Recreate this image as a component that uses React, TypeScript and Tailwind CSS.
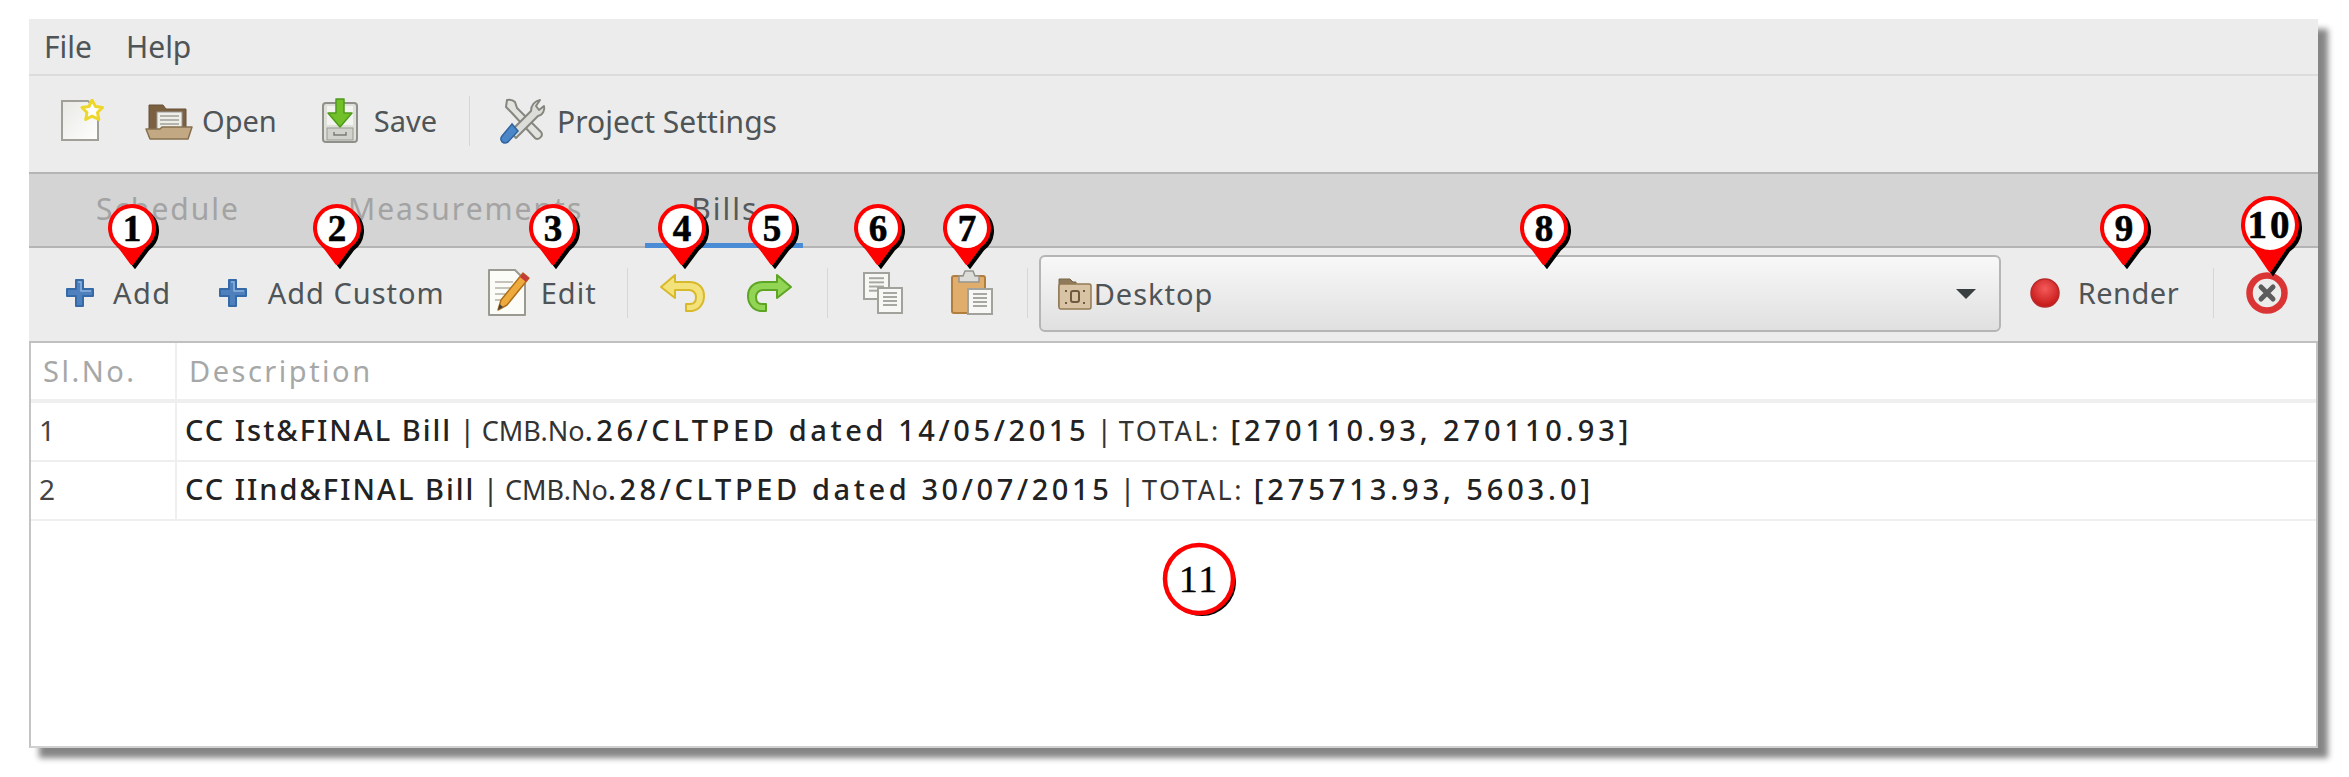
import type { ReactNode } from 'react';

function NewIcon() {
  return (
    <svg width="45" height="44" viewBox="0 0 45 44" className="shrink-0">
      <defs>
        <linearGradient id="docFill" x1="0" y1="0" x2="1" y2="1">
          <stop offset="0" stopColor="#e8e8e4" />
          <stop offset="1" stopColor="#ffffff" />
        </linearGradient>
      </defs>
      <path d="M2 2h26l10 10v29H2z" fill="url(#docFill)" stroke="#a0a098" strokeWidth="2" />
      <path d="M32 1l3.500 6.500 7 1-5 5 1.400 7-6.900-3.300-6.300 3.300 1.300-7-5-5 7-1z" fill="#fff" stroke="#eed72c" strokeWidth="3" strokeLinejoin="round" />
    </svg>
  );
}

function OpenIcon() {
  return (
    <svg width="48" height="40" viewBox="0 0 48 40" className="shrink-0">
      <path d="M4 36V4h14l3 4h20v24z" fill="#7c6140" stroke="#66503a" />
      <rect x="12" y="11" width="25" height="18" fill="#efefea" stroke="#999" />
      <path d="M15 15h19M15 19h19M15 23h19" stroke="#b4b4ac" strokeWidth="2" />
      <path d="M1 28h14l2-2h30l-4 12H5z" fill="#c3a983" stroke="#86704f" strokeWidth="1.500" strokeLinejoin="round" />
    </svg>
  );
}

function SaveIcon() {
  return (
    <svg width="38" height="46" viewBox="0 0 38 46" className="shrink-0">
      <rect x="2" y="5" width="34" height="39" rx="3" fill="#dfe0da" stroke="#8f9089" strokeWidth="2" />
      <rect x="6" y="8" width="26" height="19" fill="#f2f2ef" />
      <rect x="6" y="30" width="26" height="12" fill="#d2d2cd" stroke="#9a9a94" />
      <path d="M13 34v3h12v-3" fill="none" stroke="#7d7d78" strokeWidth="1.500" />
      <path d="M15 1h8v14h8L19 29 7 15h8z" fill="#72c029" stroke="#4f9a1b" strokeWidth="1.500" strokeLinejoin="round" />
    </svg>
  );
}

function SettingsIcon() {
  return (
    <svg width="48" height="47" viewBox="0 0 48 47" className="shrink-0">
      <path d="M9 2l-1 7 5 5 24 26c3 3 9-2 6-6L19 10l-2-6c-2-2-4-3-8-2z" fill="#e2e3de" stroke="#85877f" strokeWidth="2" strokeLinejoin="round" />
      <path d="M42 2l-4 6 3 4 5-4c1 4-1 9-6 10l-22 22-6-6 21-21c0-6 4-10 9-11z" fill="#dcddd8" stroke="#85877f" strokeWidth="2" strokeLinejoin="round" />
      <path d="M14 26L4 38c-3 4 1 9 6 6l10-11z" fill="#4a86c8" stroke="#2f639e" strokeWidth="1.500" />
    </svg>
  );
}

function PlusIcon() {
  return (
    <svg width="32" height="32" viewBox="0 0 32 32" className="shrink-0">
      <path d="M12 3h7v9h10v7H19v10h-7V19H3v-7h9z" fill="#4d80bd" stroke="#356aa8" strokeWidth="2" strokeLinejoin="round" />
      <path d="M14 5h3v9h10" fill="none" stroke="#8db2dc" strokeWidth="1.500" />
    </svg>
  );
}

function EditIcon() {
  return (
    <svg width="44" height="49" viewBox="0 0 44 49" className="shrink-0">
      <path d="M2 2h26l10 10v35H2z" fill="#fbfbf8" stroke="#9a9a92" strokeWidth="2" strokeLinejoin="round" />
      <path d="M8 14h18M8 20h16M8 26h12M8 32h8" stroke="#c4c4bc" strokeWidth="2" />
      <path d="M36 5l6 5-22 27-9 5 3-10z" fill="#eeaa3c" stroke="#b0701a" strokeWidth="1.500" strokeLinejoin="round" />
      <path d="M36 5l6 5-3 4-6-5z" fill="#c8393a" />
      <path d="M11 42l1.500-6 3.500 3z" fill="#444" />
    </svg>
  );
}

function UndoIcon() {
  return (
    <svg width="46" height="38" viewBox="0 0 46 38" className="shrink-0">
      <path d="M1 13L15 1v7h14c10 0 15 6 15 14 0 8-5 14-12 15h-6v-7h4c4 0 6-3 6-7s-3-7-7-7H15v8z" fill="#f3e27a" stroke="#d8b92c" strokeWidth="2" strokeLinejoin="round" />
    </svg>
  );
}

function RedoIcon() {
  return (
    <svg width="46" height="38" viewBox="0 0 46 38" className="shrink-0">
      <path d="M45 13L31 1v7H17C7 8 2 14 2 22c0 8 5 14 12 15h6v-7h-4c-4 0-6-3-6-7s3-7 7-7h14v8z" fill="#92d454" stroke="#5ea526" strokeWidth="2" strokeLinejoin="round" />
    </svg>
  );
}

function Sheet({ x, y, w, h }: { x: number; y: number; w: number; h: number }) {
  const lines = [0.2, 0.36, 0.52, 0.68].map((f) => y + h * f);
  return (
    <g>
      <rect x={x} y={y} width={w} height={h} fill="#f7f7f5" stroke="#a2a29c" strokeWidth="2" />
      {lines.map((ly) => (
        <path key={ly} d={`M${x + 5} ${ly}h${w - 10}`} stroke="#a8a8a2" strokeWidth="2" />
      ))}
    </g>
  );
}

function CopyIcon() {
  return (
    <svg width="42" height="43" viewBox="0 0 42 43" className="shrink-0">
      <Sheet x={2} y={2} w={25} h={26} />
      <Sheet x={16} y={17} w={24} h={25} />
    </svg>
  );
}

function PasteIcon() {
  return (
    <svg width="43" height="45" viewBox="0 0 43 45" className="shrink-0">
      <rect x="1" y="6" width="33" height="37" rx="2" fill="#e0ad6c" stroke="#b17e3d" strokeWidth="2" />
      <path d="M8 6h4l2-5h8l2 5h4v6H8z" fill="#dcdcd8" stroke="#95958f" strokeWidth="1.500" />
      <Sheet x={17} y={19} w={24} h={25} />
    </svg>
  );
}

function DesktopIcon() {
  return (
    <svg width="34" height="33" viewBox="0 0 34 33" className="shrink-0">
      <path d="M1 30V2h11l3 3h3v4H1z" fill="#8f7a5c" stroke="#7a6648" />
      <rect x="1" y="7" width="32" height="25" rx="2" fill="#d8c4a4" stroke="#927a56" strokeWidth="1.500" />
      <path d="M8 13v2M26 13v2M8 25v2M26 25v2" stroke="#6e5a40" strokeWidth="2" />
      <rect x="13" y="14" width="8" height="11" rx="2" fill="none" stroke="#6e5a40" strokeWidth="2" />
    </svg>
  );
}

function RecordIcon() {
  return (
    <svg width="30" height="30" viewBox="0 0 30 30" className="shrink-0">
      <defs>
        <radialGradient id="dotFill" cx="0.5" cy="0.35" r="0.6">
          <stop offset="0" stopColor="#f45a5a" />
          <stop offset="1" stopColor="#c81a1a" />
        </radialGradient>
      </defs>
      <circle cx="15" cy="15" r="14" fill="url(#dotFill)" stroke="#b92a2a" strokeWidth="1.500" />
    </svg>
  );
}

function CloseIcon() {
  return (
    <svg width="42" height="42" viewBox="0 0 42 42" className="shrink-0">
      <circle cx="21" cy="21" r="17.500" fill="#ececea" stroke="#db3434" strokeWidth="6.500" />
      <path d="M15 15l12 12M27 15L15 27" stroke="#5c5c5c" strokeWidth="5" strokeLinecap="round" />
    </svg>
  );
}

function Divider({ className }: { className: string }) {
  return <div className={`w-px h-[50px] bg-[#d6d6d6] shrink-0 ${className}`} />;
}

// numbered callout over the screenshot, x/y is the centre of the circle
function Pin({ n, x, y, big }: { n: string; x: number; y: number; big?: boolean }) {
  const r = big ? 27 : 22;
  const len = big ? 45 : 35;
  const leg = r * 0.57;
  const drop = r * 0.82;
  const c = 34;
  const d = `M${c} ${c + len}L${c - leg} ${c + drop}A${r} ${r} 0 1 1 ${c + leg} ${c + drop}Z`;
  return (
    <svg
      width="72"
      height="92"
      viewBox="0 0 72 92"
      className="absolute"
      style={{ left: x - c - 29, top: y - c - 19 }}
    >
      <path d={d} transform="translate(3 3)" fill="#000" stroke="#000" strokeWidth="4" />
      <path d={d} fill="#f00" stroke="#f00" strokeWidth="4" strokeLinejoin="round" />
      <circle cx={c} cy={c} r={r - 2} fill="#fff" />
      <text
        x={c}
        y={c + 13}
        textAnchor="middle"
        fontSize={big ? 39 : 37}
        fontWeight="700"
        fontFamily="'Liberation Serif', serif"
        fill="#000"
        stroke="#000"
        strokeWidth="0.6"
        letterSpacing={big ? 3 : 0}
      >
        {n}
      </text>
    </svg>
  );
}

function Badge() {
  return (
    <svg width="80" height="80" viewBox="0 0 80 80" className="absolute left-[1132px] top-[522px]">
      <circle cx="41" cy="41" r="34" fill="#000" />
      <circle cx="38" cy="38" r="34" fill="#fff" stroke="#f00" strokeWidth="4.500" />
      <text x="38" y="51" textAnchor="middle" fontSize="38" fontFamily="'Liberation Serif', serif" fill="#000" stroke="#000" strokeWidth="0.3" letterSpacing="2">
        11
      </text>
    </svg>
  );
}

function Label({ children, className }: { children: ReactNode; className: string }) {
  return <span className={`whitespace-nowrap ${className}`}>{children}</span>;
}

function BillRow({
  no,
  title,
  rest,
  total,
}: {
  no: string;
  title: string;
  rest: string;
  total: string;
}) {
  return (
    <div className="flex h-[59px] border-b-2 border-[#efefef] items-center">
      <div className="w-[146px] h-full flex items-center pl-[8px] pb-[3px] border-r-2 border-[#efefef] text-[28px] text-[#444] shrink-0">
        {no}
      </div>
      <div className="pl-[8px] pb-[3px] whitespace-nowrap text-[29px] text-[#222] font-medium tracking-[2px]">
        {title}
        <span className="font-normal text-[#333] tracking-[-0.5px]"> | </span>
        <span className="font-normal text-[27px] text-[#333] tracking-normal">CMB.No</span>
        <span className="tracking-[3.6px]">{rest}</span>
        <span className="font-normal text-[#333] tracking-[-0.5px]"> | </span>
        <span className="font-normal text-[27px] text-[#333] tracking-[2.6px]">TOTAL: </span>
        <span className="tracking-[3.9px]">{total}</span>
      </div>
    </div>
  );
}

export default function App() {
  return (
    <div className="w-[2349px] h-[777px] bg-white overflow-hidden pt-[19px] pl-[29px] font-['Noto_Sans','Open_Sans',sans-serif]">
      <div className="relative w-[2289px] h-[729px] flex flex-col bg-white shadow-[10px_10px_6px_rgba(0,0,0,0.48)] text-[#4f5457]">
        <div className="h-[57px] bg-[#ececec] border-b-2 border-[#dcdcdc] flex items-center pl-[16px] text-[30px] shrink-0">
          <Label className="-ml-[1px]">File</Label>
          <Label className="ml-[34px]">Help</Label>
        </div>

        <div className="h-[96px] bg-[#ececec] flex items-center text-[30px] pb-[6px] shrink-0">
          <div className="ml-[31px]"><NewIcon /></div>
          <div className="ml-[40px]"><OpenIcon /></div>
          <Label className="ml-[9px] text-[29px]">Open</Label>
          <div className="ml-[44px]"><SaveIcon /></div>
          <Label className="ml-[15px] text-[29px]">Save</Label>
          <Divider className="ml-[32px]" />
          <div className="ml-[28px]"><SettingsIcon /></div>
          <Label className="ml-[11px]">Project Settings</Label>
        </div>

        <div className="relative h-[76px] bg-[#d4d4d4] border-y-2 border-[#b4b4b4] flex items-center text-[30px] tracking-[2px] pb-[4px] shrink-0">
          <Label className="ml-[67px] text-[#a3a3a3]">Schedule</Label>
          <Label className="ml-[108px] text-[#a3a3a3]">Measurements</Label>
          <Label className="ml-[108px] text-[#55595c]">Bills</Label>
          <div className="absolute left-[616px] bottom-[-2px] w-[158px] h-[5px] bg-[#4a8bd6]" />
        </div>

        <div className="h-[95px] bg-[#ececec] border-b-2 border-[#c0c0c0] flex items-center text-[29px] tracking-[1px] pb-[4px] shrink-0">
          <div className="ml-[35px]"><PlusIcon /></div>
          <Label className="ml-[17px] tracking-[1.5px]">Add</Label>
          <div className="ml-[45px]"><PlusIcon /></div>
          <Label className="ml-[19px]">Add Custom</Label>
          <div className="ml-[42px]"><EditIcon /></div>
          <Label className="ml-[10px]">Edit</Label>
          <Divider className="ml-[30px]" />
          <div className="ml-[32px]"><UndoIcon /></div>
          <div className="ml-[40px]"><RedoIcon /></div>
          <Divider className="ml-[35px]" />
          <div className="ml-[34px]"><CopyIcon /></div>
          <div className="ml-[47px]"><PasteIcon /></div>
          <Divider className="ml-[33px]" />
          <div className="ml-[11px] mt-[2px] w-[962px] h-[77px] rounded-[6px] border-2 border-[#b5b5b5] bg-gradient-to-b from-[#f8f8f8] to-[#e0e0e0] flex items-center pl-[17px] pr-[23px] shrink-0">
            <DesktopIcon />
            <Label className="ml-[2px]">Desktop</Label>
            <div className="ml-auto w-0 h-0 border-x-[10px] border-x-transparent border-t-[10px] border-t-[#3a3f42]" />
          </div>
          <div className="ml-[29px]"><RecordIcon /></div>
          <Label className="ml-[18px] tracking-[0.5px]">Render</Label>
          <Divider className="ml-[34px]" />
          <div className="ml-[32px]"><CloseIcon /></div>
        </div>

        <div className="flex-1 border-x-2 border-b-2 border-x-[#c4c4c4] border-b-[#d0d0d0] bg-white min-h-0">
          <div className="flex h-[60px] border-b-4 border-[#efefef] items-center text-[29px] text-[#a6a8a8] tracking-[2.5px]">
            <div className="w-[146px] h-full flex items-center pl-[12px] border-r-2 border-[#efefef] shrink-0">Sl.No.</div>
            <div className="pl-[12px]">Description</div>
          </div>
          <BillRow no="1" title="CC Ist&FINAL Bill" rest=".26/CLTPED dated 14/05/2015" total="[270110.93, 270110.93]" />
          <BillRow no="2" title="CC IInd&FINAL Bill" rest=".28/CLTPED dated 30/07/2015" total="[275713.93, 5603.0]" />
        </div>

        <Pin n="1" x={132} y={228} />
        <Pin n="2" x={337} y={228} />
        <Pin n="3" x={553} y={228} />
        <Pin n="4" x={682} y={228} />
        <Pin n="5" x={772} y={228} />
        <Pin n="6" x={878} y={228} />
        <Pin n="7" x={967} y={228} />
        <Pin n="8" x={1544} y={228} />
        <Pin n="9" x={2124} y={228} />
        <Pin n="10" x={2270} y={225} big />
        <Badge />
      </div>
    </div>
  );
}
